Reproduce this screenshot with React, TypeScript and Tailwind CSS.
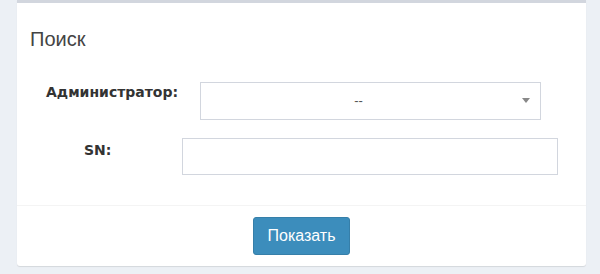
export default function App() {
    return (
        <div className="w-[600px] h-[274px] bg-[#ecf0f5] font-['Liberation_Sans',Arial,sans-serif] overflow-hidden">
            <div className="ml-[17px] w-[569px] bg-white border-t-[3px] border-[#d2d6de] rounded-b-[3px] shadow-[0_1px_1px_rgba(0,0,0,0.1)]">
                {/* header */}
                <div className="h-[57px] pt-[24px] pl-[13px]">
                    <h3 className="text-[20px] leading-[24px] text-[#444]">Поиск</h3>
                </div>

                {/* body */}
                <div className="pt-[22px] pb-[30px]">
                    <div className="flex items-start h-[38px]">
                        <label className="w-[183px] pl-[29px] text-[14px] leading-[20px] font-bold text-[#333] font-['DejaVu_Sans',Verdana,sans-serif]">Администратор:</label>
                        <div className="w-[341px] h-[38px] border border-[#d2d6de] flex items-center relative">
                            <span className="flex-1 text-center pr-[24px] text-[13px] text-[#555]">--</span>
                            <span className="absolute right-[10px] top-[15px] w-0 h-0 border-l-[4px] border-r-[4px] border-t-[5px] border-l-transparent border-r-transparent border-t-[#888]"></span>
                        </div>
                    </div>
                    <div className="flex items-start mt-[18px]">
                        <label className="w-[165px] pl-[67px] pt-[2px] text-[14px] leading-[20px] font-bold text-[#333] font-['DejaVu_Sans',Verdana,sans-serif]">SN:</label>
                        <input className="w-[376px] h-[37px] border border-[#d2d6de] outline-none px-3 text-[14px]" />
                    </div>
                </div>

                {/* footer */}
                <div className="border-t border-[#f4f4f4] flex justify-center pt-[11px] pb-[11px]">
                    <button className="w-[97px] h-[38px] bg-[#3c8dbc] border border-[#367fa9] rounded-[3px] text-white text-[16px]">Показать</button>
                </div>
            </div>
        </div>
    )
}
